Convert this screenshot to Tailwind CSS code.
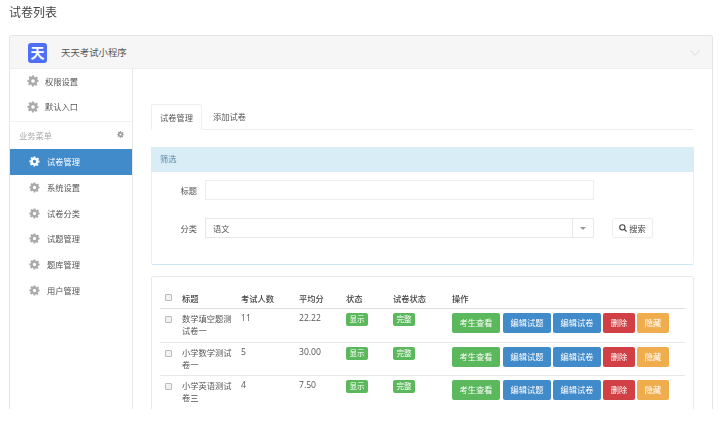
<!DOCTYPE html>
<html lang="zh">
<head>
<meta charset="UTF-8">
<title>试卷列表</title>
<script src="https://cdn.jsdelivr.net/npm/@tailwindcss/browser@4"></script>
</head>
<body class="bg-white text-[#555] text-[8.25px] leading-[11px] font-['Open_Sans','Noto_Sans_CJK_SC',sans-serif] overflow-hidden">

<svg class="hidden">
  <symbol id="gear" viewBox="0 0 24 24">
    <path fill="currentColor" fill-rule="evenodd" d="M10 1h4l.6 3.2 1.9.8 2.7-1.8 2.8 2.8-1.8 2.7.8 1.9L23 10v4l-3.2.6-.8 1.9 1.8 2.7-2.8 2.8-2.7-1.8-1.9.8L13.9 23h-4l-.5-3.2-1.9-.8-2.7 1.8L2 18l1.8-2.7-.8-1.9L.9 14v-4l3.1-.6.8-1.9L3 4.8 5.8 2l2.7 1.8 1-.6zM12 8.4a3.6 3.6 0 1 0 0 7.2 3.6 3.6 0 0 0 0-7.2z"/>
  </symbol>
</svg>

<div class="blur-[0.3px]">
<h1 class="pl-[9px] pt-[5px] h-[35px] text-[12px] leading-[16px] font-normal text-[#444]">试卷列表</h1>

<div class="mx-[9px] w-[704px] h-[374px] border-x border-t border-[#e5e5e5] rounded-t-[3px] overflow-hidden flex flex-col">
  <!-- app header -->
  <div class="h-[33px] shrink-0 bg-[#f6f6f6] border-b border-[#eee] flex items-center pl-[18px] pr-[12px]">
    <div class="mt-[2px] w-[19px] h-[20px] rounded-[3px] bg-[#4f70f5] flex items-center justify-center">
      <span class="text-white font-bold text-[14px] leading-[20px]">天</span>
    </div>
    <span class="ml-[14px] text-[#555] text-[9.4px]">天天考试小程序</span>
    <svg class="ml-auto mt-[1px] w-[10px] h-[6px] text-[#ccc]" viewBox="0 0 10 6" fill="none" stroke="currentColor" stroke-width="0.7"><path d="M0.3 0.4 5 5.3 9.7 0.4"/></svg>
  </div>

  <div class="flex flex-1 min-h-0">
    <!-- sidebar -->
    <aside class="w-[123px] shrink-0 border-r border-[#e7e7e7] flex flex-col">
      <a class="flex items-center h-[25px] shrink-0 pl-[17px] gap-[6px] pb-[1px]"><svg class="w-[12px] h-[12px] text-[#aaa]"><use href="#gear"/></svg>权限设置</a>
      <a class="flex items-center h-[28px] shrink-0 pl-[17px] gap-[6px] border-b border-[#f3f3f3] pb-[2px]"><svg class="w-[12px] h-[12px] text-[#aaa]"><use href="#gear"/></svg>默认入口</a>
      <div class="flex items-center justify-between h-[27px] shrink-0 pl-[9px] pr-[8px] text-[#aaa]">业务菜单<svg class="w-[7px] h-[7px] text-[#999] -mt-[2px]"><use href="#gear"/></svg></div>
      <a class="flex items-center h-[26px] shrink-0 pl-[19px] pb-[1px] gap-[7px] bg-[#428bca] text-white"><svg class="w-[11px] h-[11px]"><use href="#gear"/></svg>试卷管理</a>
      <a class="flex items-center h-[26px] shrink-0 pl-[19px] pb-[1px] gap-[7px]"><svg class="w-[11px] h-[11px] text-[#aaa]"><use href="#gear"/></svg>系统设置</a>
      <a class="flex items-center h-[25px] shrink-0 pl-[19px] pb-[1px] gap-[7px]"><svg class="w-[11px] h-[11px] text-[#aaa]"><use href="#gear"/></svg>试卷分类</a>
      <a class="flex items-center h-[26px] shrink-0 pl-[19px] pb-[1px] gap-[7px]"><svg class="w-[11px] h-[11px] text-[#aaa]"><use href="#gear"/></svg>试题管理</a>
      <a class="flex items-center h-[26px] shrink-0 pl-[19px] pb-[1px] gap-[7px]"><svg class="w-[11px] h-[11px] text-[#aaa]"><use href="#gear"/></svg>题库管理</a>
      <a class="flex items-center h-[25px] shrink-0 pl-[19px] pb-[1px] gap-[7px]"><svg class="w-[11px] h-[11px] text-[#aaa]"><use href="#gear"/></svg>用户管理</a>
    </aside>

    <!-- main -->
    <main class="flex-1 pl-[18px] pr-[18px] pt-[35px] min-w-0">
      <div class="flex h-[26px] border-b border-[#eee]">
        <div class="w-[51px] h-[26px] flex items-center justify-center bg-white border border-[#eee] border-b-white rounded-t-[2px]">试卷管理</div>
        <div class="w-[53px] pl-[2px] flex items-center justify-center">添加试卷</div>
      </div>

      <section class="mt-[17px] h-[118px] border border-[#e3f2f8] border-b-[#c9e8f2] rounded-[2px]">
        <div class="h-[25px] -mt-px -mx-px bg-[#d9edf7] flex items-center pl-[9px] pb-[2px] text-[#5a8aa5]">筛选</div>
        <div class="flex items-center h-[20px] mt-[8px]">
          <label class="w-[45px] text-right text-[#555]">标题</label>
          <div class="ml-[8px] w-[389px] h-[20px] border border-[#eee]"></div>
        </div>
        <div class="flex items-center h-[20px] mt-[18px]">
          <label class="w-[45px] text-right text-[#555]">分类</label>
          <div class="ml-[8px] w-[389px] h-[20px] border border-[#e8e8e8] flex items-center pl-[7px]">
            语文
            <span class="ml-auto w-[21px] h-full border-l border-[#e8e8e8] flex items-center justify-center">
              <span class="w-0 h-0 border-x-[3px] border-x-transparent border-t-[3px] border-t-[#999]"></span>
            </span>
          </div>
          <button class="ml-[18px] w-[41px] h-[20px] border border-[#eee] rounded-[2px] flex items-center justify-center gap-[2px] text-[#444]">
            <svg class="w-[8px] h-[8px]" viewBox="0 0 10 10" fill="none" stroke="#444" stroke-width="1.4"><circle cx="4.2" cy="4.2" r="3.3"/><path d="M6.6 6.6 9.4 9.4"/></svg>搜索
          </button>
        </div>
      </section>

      <section class="mt-[11px] h-[200px] border border-[#eaeaea] rounded-[2px] px-[8px] pt-[12px]">
        <table class="table-fixed border-collapse w-[525px] text-left">
          <colgroup><col class="w-[22px]"><col class="w-[59px]"><col class="w-[58px]"><col class="w-[47px]"><col class="w-[47px]"><col class="w-[59px]"><col></colgroup>
          <thead class="text-[#444]">
            <tr class="h-[19px] border-b border-[#ddd]">
              <th class="pl-[5px] pb-[2px] font-normal"><span class="block w-[7px] h-[7px] border border-[#bbb] bg-[#f2f2f2] rounded-[1px]"></span></th>
              <th class="font-medium">标题</th><th class="font-medium">考试人数</th><th class="font-medium">平均分</th><th class="font-medium">状态</th><th class="font-medium">试卷状态</th><th class="font-medium">操作</th>
            </tr>
          </thead>
          <tbody class="align-top">
            <tr class="h-[34px] border-b border-[#e8e8e8]">
              <td class="pl-[5px] pt-[7px]"><span class="block w-[7px] h-[7px] border border-[#bbb] bg-[#f2f2f2] rounded-[1px]"></span></td>
              <td class="pt-[4px] pr-[8px] leading-[12px]">数学填空题测试卷一</td><td class="pt-[4px] text-[8.6px]">11</td><td class="pt-[4px] text-[8.6px]">22.22</td>
              <td class="pt-[4px]"><span class="inline-flex w-[22px] h-[13px] items-center justify-center rounded-[2px] bg-[#5cb85c] text-white text-[7.5px]">显示</span></td>
              <td class="pt-[4px]"><span class="inline-flex w-[22px] h-[13px] items-center justify-center rounded-[2px] bg-[#5cb85c] text-white text-[7.5px]">完整</span></td>
              <td class="pt-[4px]"><div class="flex text-white">
                <a class="w-[48px] h-[20px] flex items-center justify-center rounded-[2px] bg-[#5cb85c]">考生查看</a>
                <a class="ml-[3px] w-[48px] h-[20px] flex items-center justify-center rounded-[2px] bg-[#428bca]">编辑试题</a>
                <a class="ml-[2px] w-[48px] h-[20px] flex items-center justify-center rounded-[2px] bg-[#428bca]">编辑试卷</a>
                <a class="ml-[2px] w-[32px] h-[20px] flex items-center justify-center rounded-[2px] bg-[#d04045]">删除</a>
                <a class="ml-[2px] w-[32px] h-[20px] flex items-center justify-center rounded-[2px] bg-[#f0ad4e]">隐藏</a>
              </div></td>
            </tr>
            <tr class="h-[33px] border-b border-[#e8e8e8]">
              <td class="pl-[5px] pt-[7px]"><span class="block w-[7px] h-[7px] border border-[#bbb] bg-[#f2f2f2] rounded-[1px]"></span></td>
              <td class="pt-[4px] pr-[8px] leading-[12px]">小学数学测试卷一</td><td class="pt-[4px] text-[8.6px]">5</td><td class="pt-[4px] text-[8.6px]">30.00</td>
              <td class="pt-[4px]"><span class="inline-flex w-[22px] h-[13px] items-center justify-center rounded-[2px] bg-[#5cb85c] text-white text-[7.5px]">显示</span></td>
              <td class="pt-[4px]"><span class="inline-flex w-[22px] h-[13px] items-center justify-center rounded-[2px] bg-[#5cb85c] text-white text-[7.5px]">完整</span></td>
              <td class="pt-[4px]"><div class="flex text-white">
                <a class="w-[48px] h-[20px] flex items-center justify-center rounded-[2px] bg-[#5cb85c]">考生查看</a>
                <a class="ml-[3px] w-[48px] h-[20px] flex items-center justify-center rounded-[2px] bg-[#428bca]">编辑试题</a>
                <a class="ml-[2px] w-[48px] h-[20px] flex items-center justify-center rounded-[2px] bg-[#428bca]">编辑试卷</a>
                <a class="ml-[2px] w-[32px] h-[20px] flex items-center justify-center rounded-[2px] bg-[#d04045]">删除</a>
                <a class="ml-[2px] w-[32px] h-[20px] flex items-center justify-center rounded-[2px] bg-[#f0ad4e]">隐藏</a>
              </div></td>
            </tr>
            <tr class="h-[34px] border-b border-[#e8e8e8]">
              <td class="pl-[5px] pt-[7px]"><span class="block w-[7px] h-[7px] border border-[#bbb] bg-[#f2f2f2] rounded-[1px]"></span></td>
              <td class="pt-[4px] pr-[8px] leading-[12px]">小学英语测试卷三</td><td class="pt-[4px] text-[8.6px]">4</td><td class="pt-[4px] text-[8.6px]">7.50</td>
              <td class="pt-[4px]"><span class="inline-flex w-[22px] h-[13px] items-center justify-center rounded-[2px] bg-[#5cb85c] text-white text-[7.5px]">显示</span></td>
              <td class="pt-[4px]"><span class="inline-flex w-[22px] h-[13px] items-center justify-center rounded-[2px] bg-[#5cb85c] text-white text-[7.5px]">完整</span></td>
              <td class="pt-[4px]"><div class="flex text-white">
                <a class="w-[48px] h-[20px] flex items-center justify-center rounded-[2px] bg-[#5cb85c]">考生查看</a>
                <a class="ml-[3px] w-[48px] h-[20px] flex items-center justify-center rounded-[2px] bg-[#428bca]">编辑试题</a>
                <a class="ml-[2px] w-[48px] h-[20px] flex items-center justify-center rounded-[2px] bg-[#428bca]">编辑试卷</a>
                <a class="ml-[2px] w-[32px] h-[20px] flex items-center justify-center rounded-[2px] bg-[#d04045]">删除</a>
                <a class="ml-[2px] w-[32px] h-[20px] flex items-center justify-center rounded-[2px] bg-[#f0ad4e]">隐藏</a>
              </div></td>
            </tr>
          </tbody>
        </table>
      </section>
    </main>
  </div>
</div>
</div>
</body>
</html>
